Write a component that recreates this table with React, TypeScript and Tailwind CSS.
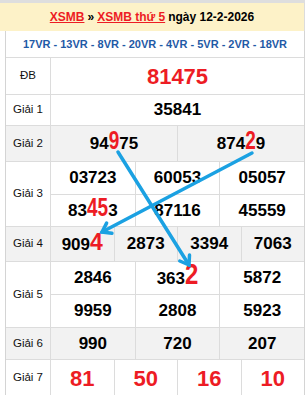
// Bảng kết quả XSMB (ảnh chụp 307x395)
import React from "react";

const font = { fontFamily: '"Liberation Sans", Arial, sans-serif' };

// ô nhãn bên trái
const Label = ({ text }: { text: string }) => (
  <div className="w-[45px] shrink-0 flex items-center justify-center border-r border-[#dcdcdc] text-[11.5px] text-[#111]">
    {text}
  </div>
);

// hàng giải: nhãn + các dòng số
const Row = ({
  label,
  h,
  gray,
  children,
}: {
  label: string;
  h: string;
  gray?: boolean;
  children: React.ReactNode;
}) => (
  <div className={`flex border-b border-[#dcdcdc] ${h} ${gray ? "bg-[#f2f2f2]" : "bg-white"}`}>
    <Label text={label} />
    <div className="flex-1 flex flex-col">{children}</div>
  </div>
);

// một dòng chia cột
const Cells = ({ items, last = true }: { items: React.ReactNode[]; last?: boolean }) => (
  <div className={`flex flex-1 ${last ? "" : "border-b border-[#dcdcdc]"}`}>
    {items.map((it, i) => (
      <div
        key={i}
        className={`flex-1 basis-0 flex items-center justify-center text-[17px] font-bold text-black ${
          i > 0 ? "border-l border-[#dcdcdc]" : ""
        }`}
      >
        {it}
      </div>
    ))}
  </div>
);

const Tall = ({ t }: { t: string }) => (
  <span className="inline-block text-[19px] leading-none text-[#ed1c24] scale-y-[1.4] origin-[50%_80%]">{t}</span>
);

export default function App() {
  return (
    <div className="relative w-[307px] h-[395px] overflow-hidden bg-white" style={font}>
      <div className="h-[3px] bg-[#dedede] w-[305px]" />
      <div className="w-[305px] h-[28px] bg-[#fdf2c8] border-r border-[#dcdcdc] flex items-center justify-center text-[12px] font-bold text-black">
        <span className="text-[#ed1c24] underline">XSMB</span>
        <span className="mx-[3px]">»</span>
        <span className="text-[#ed1c24] underline">XSMB thứ 5</span>
        <span className="ml-[3px]">ngày 12-2-2026</span>
      </div>

      <div className="ml-[5px] w-[300px] border-l border-r border-[#d4d4d4]">
        <div className="h-[27px] border-b border-[#dcdcdc] flex items-center justify-center text-[11px] font-bold text-[#1f5aa6]">
          17VR - 13VR - 8VR - 20VR - 4VR - 5VR - 2VR - 18VR
        </div>

        <Row label="ĐB" h="h-[37px]">
          <div className="flex-1 flex items-center justify-center text-[22px] font-bold text-[#ed1c24]">81475</div>
        </Row>

        <Row label="Giải 1" h="h-[31px]">
          <Cells items={["35841"]} />
        </Row>

        <Row label="Giải 2" h="h-[36px]" gray>
          <Cells
            items={[
              <span>
                94<Tall t="9" />75
              </span>,
              <span>
                874<Tall t="2" />9
              </span>,
            ]}
          />
        </Row>

        <Row label="Giải 3" h="h-[65px]">
          <Cells items={["03723", "60053", "05057"]} last={false} />
          <Cells
            items={[
              <span>
                83<Tall t="45" />3
              </span>,
              "87116",
              "45559",
            ]}
          />
        </Row>

        <Row label="Giải 4" h="h-[35px]" gray>
          <Cells
            items={[
              <span>
                909<span className="text-[23px] leading-none text-[#ed1c24]">4</span>
              </span>,
              "2873",
              "3394",
              "7063",
            ]}
          />
        </Row>

        <Row label="Giải 5" h="h-[66px]">
          <Cells
            items={[
              "2846",
              <span>
                363
                <span className="inline-block text-[24px] leading-none text-[#ed1c24] scale-y-[1.2] origin-[50%_80%]">
                  2
                </span>
              </span>,
              "5872",
            ]}
            last={false}
          />
          <Cells items={["9959", "2808", "5923"]} />
        </Row>

        <Row label="Giải 6" h="h-[32px]" gray>
          <Cells items={["990", "720", "207"]} />
        </Row>

        <Row label="Giải 7" h="h-[37px]">
          <div className="flex flex-1">
            {["81", "50", "16", "10"].map((n, i) => (
              <div
                key={n}
                className={`flex-1 basis-0 flex items-center justify-center text-[22px] font-bold text-[#ed1c24] ${
                  i > 0 ? "border-l border-[#dcdcdc]" : ""
                }`}
              >
                {n}
              </div>
            ))}
          </div>
        </Row>
      </div>

      {/* mũi tên xanh vẽ đè lên bảng */}
      <svg className="absolute left-0 top-0 pointer-events-none" width="307" height="395" viewBox="0 0 307 395">
        <g stroke="#1ba1e2" strokeWidth="3.5" strokeLinecap="round" fill="none">
          <line x1="118" y1="152" x2="189" y2="265" />
          <polyline points="189.5,255 189,265 179.8,261" strokeLinejoin="miter" />
          <line x1="252" y1="153" x2="102" y2="232" />
          <polyline points="111.9,233.3 102,232 106.6,223.1" strokeLinejoin="miter" />
        </g>
      </svg>
    </div>
  );
}
